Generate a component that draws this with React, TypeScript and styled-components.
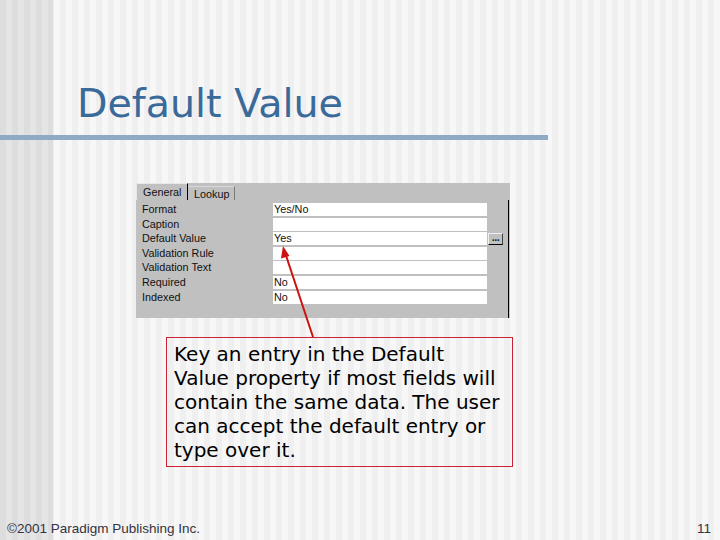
import styled, { createGlobalStyle } from 'styled-components';

const GlobalStyle = createGlobalStyle`
  html, body {
    margin: 0;
    padding: 0;
  }
`;

const Page = styled.div`
  position: relative;
  display: flex;
  flex-direction: column;
  width: 720px;
  height: 540px;
  overflow: hidden;
  background-color: #f2f2f2;
  background-image:
    linear-gradient(90deg, rgba(0, 0, 0, 0.075) 0 53px, transparent 53px),
    repeating-linear-gradient(90deg, #efefef 0 6px, #f7f7f7 6px 12px);
`;

const Title = styled.h1`
  margin: 80px 0 0 77px;
  font-family: 'DejaVu Sans', Verdana, sans-serif;
  font-weight: normal;
  font-size: 39.6px;
  line-height: 46px;
  color: #3a6a9a;
`;

const Rule = styled.div`
  margin-top: 9px;
  width: 548px;
  height: 5px;
  background: #90a9c5;
`;

const Sheet = styled.div`
  margin: 43px 0 0 136px;
  width: 374px;
  height: 135px;
  display: flex;
  flex-direction: column;
  background: #c0c0c0;
  font-family: 'Liberation Sans', Arial, sans-serif;
  font-size: 10.8px;
  color: #111;
`;

const TabRow = styled.div`
  display: flex;
  align-items: flex-end;
  height: 17px;
`;

const Tab = styled.div<{ $active?: boolean }>`
  box-sizing: border-box;
  height: ${(p) => (p.$active ? '17px' : '14px')};
  padding: 0 6px;
  display: flex;
  align-items: center;
  border-right: 1px solid ${(p) => (p.$active ? '#000' : '#7a7a7a')};
  border-left: ${(p) => (p.$active ? '1px solid #e8e8e8' : 'none')};
  border-top: 1px solid ${(p) => (p.$active ? '#e8e8e8' : '#d8d8d8')};
  width: ${(p) => (p.$active ? '52px' : '47px')};
`;

const Body = styled.div`
  flex: 1;
  display: flex;
  flex-direction: column;
  gap: 1.6px;
  padding: 3px 0 0 6px;
  margin-right: 1px;
  border-right: 1px solid #000;
`;

const Row = styled.div`
  display: flex;
  align-items: center;
  height: 13px;
`;

const Label = styled.div`
  width: 131px;
  line-height: 13px;
`;

const Field = styled.div`
  box-sizing: border-box;
  width: 214px;
  height: 13px;
  padding-left: 1px;
  line-height: 13px;
  background: #fff;
`;

const Builder = styled.div`
  box-sizing: border-box;
  margin-left: 1px;
  width: 15px;
  height: 12px;
  display: flex;
  align-items: center;
  justify-content: center;
  border-top: 1px solid #f0f0f0;
  border-left: 1px solid #f0f0f0;
  border-right: 1px solid #404040;
  border-bottom: 1px solid #000;
  font-family: 'DejaVu Sans', sans-serif;
  font-weight: bold;
  font-size: 8px;
  line-height: 10px;
  letter-spacing: -0.5px;
  overflow: hidden;
`;

const Callout = styled.div`
  margin: 19px 0 0 166px;
  box-sizing: border-box;
  width: 347px;
  padding: 4px 7px 4px 7px;
  border: 1px solid #cc2233;
  font-family: 'DejaVu Sans', Verdana, sans-serif;
  font-size: 20px;
  line-height: 24px;
  color: #000;
  white-space: nowrap;
`;

const Footer = styled.div`
  margin-top: auto;
  display: flex;
  justify-content: space-between;
  padding: 0 9px 3px 7px;
  font-family: 'Liberation Sans', Arial, sans-serif;
  font-size: 13.5px;
  line-height: 16px;
  color: #333340;
`;

const Pointer = styled.svg`
  position: absolute;
  left: 0;
  top: 0;
  pointer-events: none;
`;

const rows: { label: string; value: string; builder?: boolean }[] = [
  { label: 'Format', value: 'Yes/No' },
  { label: 'Caption', value: '' },
  { label: 'Default Value', value: 'Yes', builder: true },
  { label: 'Validation Rule', value: '' },
  { label: 'Validation Text', value: '' },
  { label: 'Required', value: 'No' },
  { label: 'Indexed', value: 'No' },
];

export default function App() {
  return (
    <Page>
      <GlobalStyle />
      <Title>Default Value</Title>
      <Rule />
      <Sheet>
        <TabRow>
          <Tab $active>General</Tab>
          <Tab>Lookup</Tab>
        </TabRow>
        <Body>
          {rows.map((r) => (
            <Row key={r.label}>
              <Label>{r.label}</Label>
              <Field>{r.value}</Field>
              {r.builder && <Builder>...</Builder>}
            </Row>
          ))}
        </Body>
      </Sheet>
      <Callout>
        Key an entry in the Default
        <br />
        Value property if most fields will
        <br />
        contain the same data. The user
        <br />
        can accept the default entry or
        <br />
        type over it.
      </Callout>
      <Footer>
        <span>©2001 Paradigm Publishing Inc.</span>
        <span>11</span>
      </Footer>
      <Pointer width="720" height="540" viewBox="0 0 720 540">
        <line x1="313" y1="337" x2="285.5" y2="254" stroke="#cc1111" strokeWidth="2" />
        <polygon points="283,246 289.5,256 281,258.5" fill="#cc1111" />
      </Pointer>
    </Page>
  );
}
